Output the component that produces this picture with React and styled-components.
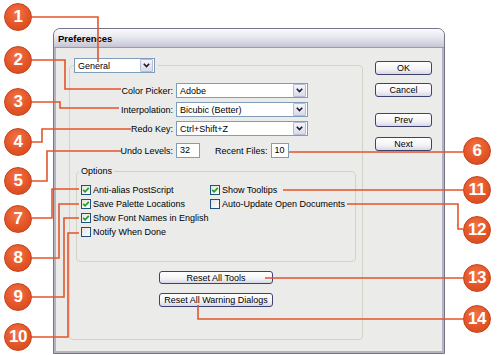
import React from "react";
import styled, { createGlobalStyle } from "styled-components";

const Global = createGlobalStyle`
  html, body { margin: 0; padding: 0; background: #ffffff; }
  body { font-family: "Liberation Sans", Arial, sans-serif; color: #000; }
`;

const Stage = styled.div`
  position: relative;
  width: 500px;
  height: 355px;
  overflow: hidden;
  background: #ffffff;
  padding: 28px 0 0 53px;
  box-sizing: border-box;
`;

const Dialog = styled.div`
  width: 392px;
  height: 326px;
  box-sizing: border-box;
  display: flex;
  flex-direction: column;
  background: #ebebea;
  border: 1px solid #75758a;
  border-radius: 7px 7px 0 0;
  box-shadow: inset 2px 0 0 #b3b3c1, inset -2px 0 0 #b3b3c1, inset 0 -2px 0 #b3b3c1;
  overflow: hidden;
`;

const TitleBar = styled.div`
  height: 18px;
  flex: none;
  border-bottom: 1px solid #9a9aae;
  background: linear-gradient(to bottom, #fbfbfd 0%, #ececf2 35%, #d6d6e2 75%, #c4c4d4 100%);
  font-weight: bold;
  font-size: 9.5px;
  line-height: 20px;
  padding-left: 4px;
`;

const Body = styled.div`
  display: flex;
  align-items: flex-start;
  gap: 12px;
  padding: 10px 12px 0 15px;
`;

const Group = styled.fieldset`
  margin: 0;
  padding: 0;
  width: 294px;
  height: 282px;
  box-sizing: border-box;
  border: 1px solid #d3d2c6;
  border-radius: 4px;
  min-width: 0;
`;

const GroupLegend = styled.legend`
  margin-left: 4px;
  padding: 0 3px 0 0;
`;

const Select = styled.div`
  display: flex;
  align-items: center;
  box-sizing: border-box;
  width: ${(p) => p.$w}px;
  height: 15px;
  background: #fff;
  border: 1px solid #7f9db9;
  font-size: 9px;
`;

const SelectText = styled.span`
  flex: 1;
  padding-left: 3px;
  white-space: nowrap;
`;

const Arrow = styled.span`
  display: flex;
  align-items: center;
  justify-content: center;
  width: 11px;
  height: 11px;
  margin-right: 1px;
  border: 1px solid #b7bdd4;
  border-radius: 1px;
  background: linear-gradient(to bottom, #f4f4fa, #d9dbea);
`;

const Content = styled.div`
  display: flex;
  flex-direction: column;
  padding-top: 10px;
`;

const FieldGrid = styled.div`
  display: grid;
  grid-template-columns: 103px 132px;
  column-gap: 3px;
  row-gap: 4px;
  align-items: center;
`;

const Label = styled.span`
  font-size: 9px;
  text-align: ${(p) => (p.$right ? "right" : "left")};
  white-space: nowrap;
`;

const NumRow = styled.div`
  display: flex;
  align-items: center;
  margin-top: 7px;
`;

const NumLabel = styled(Label)`
  width: ${(p) => p.$w}px;
  margin-left: ${(p) => p.$ml || 0}px;
  margin-right: 3px;
`;

const NumInput = styled.div`
  box-sizing: border-box;
  width: ${(p) => p.$w}px;
  height: 15px;
  background: #fff;
  border: 1px solid #7f9db9;
  font-size: 9px;
  line-height: 13px;
  padding-left: 3px;
`;

const Options = styled.fieldset`
  margin: 8px 6px 0 6px;
  padding: 6px 4px 22px 4px;
  border: 1px solid #d3d2c6;
  border-radius: 4px;
  min-width: 0;
`;

const OptionsLegend = styled.legend`
  font-size: 9px;
  padding: 0 2px;
  margin-left: -2px;
  line-height: 11px;
`;

const CheckGrid = styled.div`
  display: grid;
  grid-template-columns: 129px 1fr;
  grid-auto-rows: 14px;
  align-items: center;
`;

const CheckItem = styled.div`
  display: flex;
  align-items: center;
  gap: 2px;
  font-size: 9px;
  white-space: nowrap;
`;

const Box = styled.span`
  display: flex;
  align-items: center;
  justify-content: center;
  box-sizing: border-box;
  width: 10px;
  height: 10px;
  border: 1px solid #1c5180;
  background: linear-gradient(135deg, #e3e3de, #ffffff);
`;

const ResetStack = styled.div`
  display: flex;
  flex-direction: column;
  align-items: center;
  gap: 9px;
  margin-top: 9px;
`;

const Button = styled.div`
  box-sizing: border-box;
  width: ${(p) => p.$w}px;
  height: ${(p) => p.$h || 14}px;
  margin-top: ${(p) => p.$mt || 0}px;
  border: 1px solid #3e4270;
  border-radius: 3px;
  background: linear-gradient(to bottom, #ffffff 0%, #f3f3f6 60%, #d8d8e6 100%);
  font-size: 9px;
  display: flex;
  align-items: center;
  justify-content: center;
  white-space: nowrap;
`;

const ButtonColumn = styled.div`
  display: flex;
  flex-direction: column;
  padding-top: 3px;
`;

const Overlay = styled.svg`
  position: absolute;
  left: 0;
  top: 0;
  pointer-events: none;
`;

const Badge = styled.div`
  position: absolute;
  left: ${(p) => p.$x - 14}px;
  top: ${(p) => p.$y - 14}px;
  width: 28px;
  height: 28px;
  border-radius: 50%;
  box-sizing: border-box;
  border: 1px solid #c4421a;
  background: radial-gradient(circle at 45% 35%, #f27447 0%, #e35527 55%, #d1461c 100%);
  color: #fff;
  font-family: "Liberation Sans", Arial, sans-serif;
  font-weight: bold;
  font-size: 17px;
  letter-spacing: -0.5px;
  display: flex;
  align-items: center;
  justify-content: center;
`;

const Chevron = () => (
  <svg width="7" height="5" viewBox="0 0 7 5">
    <polyline points="0.8,0.8 3.5,3.6 6.2,0.8" fill="none" stroke="#1a1a2a" strokeWidth="1.6" />
  </svg>
);

const Check = () => (
  <svg width="8" height="8" viewBox="0 0 8 8">
    <polyline points="1.2,3.8 3.1,5.8 6.8,1.8" fill="none" stroke="#21a121" strokeWidth="1.7" />
  </svg>
);

const Dropdown = ({ w, children }) => (
  <Select $w={w}>
    <SelectText>{children}</SelectText>
    <Arrow>
      <Chevron />
    </Arrow>
  </Select>
);

const CheckOpt = ({ checked, children }) => (
  <CheckItem>
    <Box>{checked && <Check />}</Box>
    {children}
  </CheckItem>
);

const lines = [
  "M32 17 H98 V62",
  "M32 60 H65 V89 H121",
  "M32 102 H60 V108 H119",
  "M32 142 H42 V129 H131",
  "M32 181 H47 V151 H121",
  "M289 152 H463",
  "M32 218 H52 V189 H79",
  "M32 258 H59 V204 H79",
  "M32 297 H64 V218 H79",
  "M32 337 H68 V233 H79",
  "M283 190 H463",
  "M347 204 H458 V229 H463",
  "M265 278 H463",
  "M198 305 V319 H463",
];

const badges = [
  { n: 1, x: 18, y: 17 },
  { n: 2, x: 18, y: 60 },
  { n: 3, x: 18, y: 102 },
  { n: 4, x: 18, y: 142 },
  { n: 5, x: 18, y: 181 },
  { n: 6, x: 477, y: 151 },
  { n: 7, x: 18, y: 219 },
  { n: 8, x: 18, y: 258 },
  { n: 9, x: 18, y: 297 },
  { n: 10, x: 18, y: 337 },
  { n: 11, x: 477, y: 190 },
  { n: 12, x: 477, y: 230 },
  { n: 13, x: 477, y: 278 },
  { n: 14, x: 477, y: 319 },
];

export default function App() {
  return (
    <>
      <Global />
      <Stage>
        <Dialog>
          <TitleBar>Preferences</TitleBar>
          <Body>
            <Group>
              <GroupLegend>
                <Dropdown w={81}>General</Dropdown>
              </GroupLegend>
              <Content>
                <FieldGrid>
                  <Label $right>Color Picker:</Label>
                  <Dropdown w={132}>Adobe</Dropdown>
                  <Label $right>Interpolation:</Label>
                  <Dropdown w={132}>Bicubic (Better)</Dropdown>
                  <Label $right>Redo Key:</Label>
                  <Dropdown w={132}>Ctrl+Shift+Z</Dropdown>
                </FieldGrid>
                <NumRow>
                  <NumLabel $right $w={103}>Undo Levels:</NumLabel>
                  <NumInput $w={24}>32</NumInput>
                  <NumLabel $ml={15}>Recent Files:</NumLabel>
                  <NumInput $w={18}>10</NumInput>
                </NumRow>
                <Options>
                  <OptionsLegend>Options</OptionsLegend>
                  <CheckGrid>
                    <CheckOpt checked>Anti-alias PostScript</CheckOpt>
                    <CheckOpt checked>Show Tooltips</CheckOpt>
                    <CheckOpt checked>Save Palette Locations</CheckOpt>
                    <CheckOpt>Auto-Update Open Documents</CheckOpt>
                    <CheckOpt checked>Show Font Names in English</CheckOpt>
                    <span />
                    <CheckOpt>Notify When Done</CheckOpt>
                  </CheckGrid>
                </Options>
                <ResetStack>
                  <Button $w={114} $h={13}>Reset All Tools</Button>
                  <Button $w={114}>Reset All Warning Dialogs</Button>
                </ResetStack>
              </Content>
            </Group>
            <ButtonColumn>
              <Button $w={57}>OK</Button>
              <Button $w={57} $mt={8}>Cancel</Button>
              <Button $w={57} $mt={16}>Prev</Button>
              <Button $w={57} $mt={10}>Next</Button>
            </ButtonColumn>
          </Body>
        </Dialog>
        <Overlay width="500" height="355" viewBox="0 0 500 355">
          {lines.map((d, i) => (
            <path key={i} d={d} fill="none" stroke="#e2552b" strokeWidth="1.6" />
          ))}
        </Overlay>
        {badges.map((b) => (
          <Badge key={b.n} $x={b.x} $y={b.y}>
            {b.n}
          </Badge>
        ))}
      </Stage>
    </>
  );
}
